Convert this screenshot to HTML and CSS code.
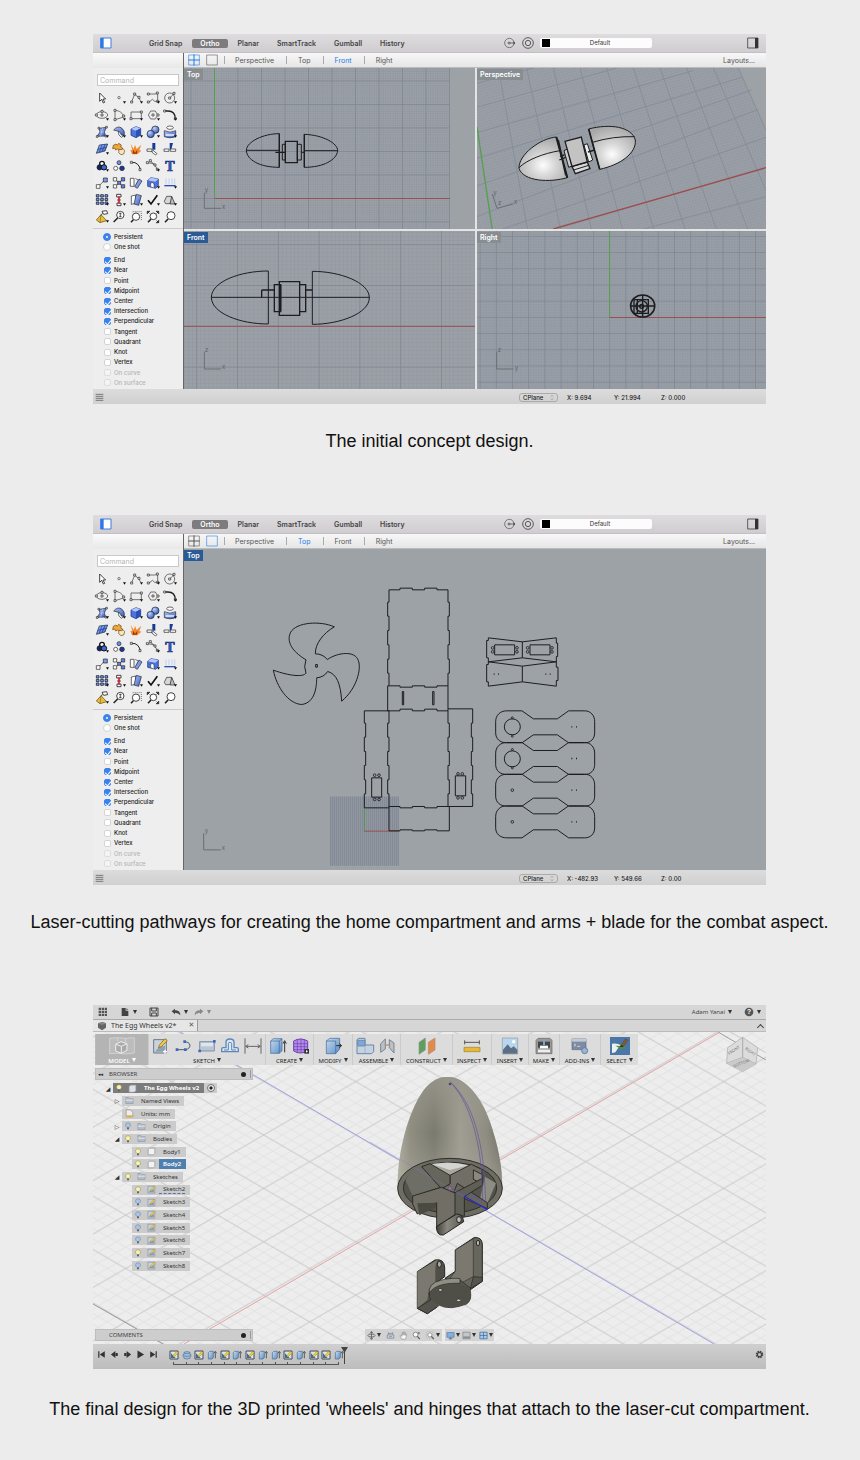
FILE: index.html
```html
<!DOCTYPE html>
<html lang="en">
<head>
<meta charset="utf-8">
<title>Design process</title>
<link rel="stylesheet" href="styles.css">
</head>
<body>
<svg class="defs" aria-hidden="true">
  <defs>
    <linearGradient id="blue" x1="0" y1="0" x2="1" y2="1"><stop offset="0" stop-color="#a9c0f6"/><stop offset="1" stop-color="#3a5fc8"/></linearGradient>
    <radialGradient id="ball" cx=".35" cy=".3" r=".8"><stop offset="0" stop-color="#c3d3fb"/><stop offset="1" stop-color="#2c4fb4"/></radialGradient>
    <linearGradient id="steel" x1="0" y1="0" x2="1" y2="1"><stop offset="0" stop-color="#c6dcf1"/><stop offset="1" stop-color="#5c8fc4"/></linearGradient>
    <radialGradient id="shell" cx=".5" cy=".65" r=".65"><stop offset="0" stop-color="#fdfdfd"/><stop offset=".4" stop-color="#d6d6d6"/><stop offset="1" stop-color="#a8a8a8"/></radialGradient>
    <linearGradient id="eggSide" x1="0" x2="1" y1="0" y2="0"><stop offset="0" stop-color="#b3b1a4"/><stop offset=".12" stop-color="#8f8d80"/><stop offset=".35" stop-color="#78776d"/><stop offset=".6" stop-color="#a19f93"/><stop offset=".85" stop-color="#8d8b7f"/><stop offset="1" stop-color="#6d6c62"/></linearGradient>
    <linearGradient id="eggTop" x1="0" x2="0" y1="0" y2="1"><stop offset="0" stop-color="#99978b" stop-opacity=".9"/><stop offset=".5" stop-color="#99978b" stop-opacity=".1"/><stop offset="1" stop-color="#b5b3a6" stop-opacity=".6"/></linearGradient>
    <linearGradient id="pin" x1="0" x2="1"><stop offset="0" stop-color="#3f3e38"/><stop offset=".4" stop-color="#8a897f"/><stop offset="1" stop-color="#57564e"/></linearGradient>

    <symbol id="more" viewBox="0 0 48 48"><path d="M36 34h9l-4.500 7z" fill="#111"/></symbol>
    <symbol id="t-select" viewBox="0 0 48 48"><path d="M17 9v25l6-6 5 11 4-2-5-10h8z" fill="#fff" stroke="#222" stroke-width="2.500"/></symbol>
    <symbol id="t-point" viewBox="0 0 48 48"><circle cx="24" cy="23" r="3.500" fill="#fff" stroke="#333" stroke-width="2"/></symbol>
    <symbol id="t-polyline" viewBox="0 0 48 48"><path d="M11 35l9-22 12 9 6 12" class="ln"/><path d="M8 33h6v6H8zM17 9h6v6h-6zM30 19h6v6h-6z" class="nd"/></symbol>
    <symbol id="t-curve" viewBox="0 0 48 48"><path d="M9 12h20q8 0 8-3M9 36q8 0 10-6t10 4h9M38 12v22" class="ln"/><path d="M7 9h6v6H7zM34 6h6v6h-6zM7 33h6v6H7zM35 31h6v6h-6z" class="nd"/></symbol>
    <symbol id="t-circle" viewBox="0 0 48 48"><circle cx="23" cy="24" r="15" class="ln"/><path d="M23 24l13-13" class="ln"/><path d="M20 21h6v6h-6zM33 7h6v6h-6z" class="nd"/></symbol>
    <symbol id="t-ellipse" viewBox="0 0 48 48"><ellipse cx="24" cy="24" rx="17" ry="10" class="ln"/><path d="M21 21h6v6h-6zM21 10h6v6h-6zM4 21h6v6H4z" class="nd"/></symbol>
    <symbol id="t-arc" viewBox="0 0 48 48"><path d="M12 38V10c14 1 24 8 26 20L12 38" class="ln"/><path d="M9 7h6v6H9zM9 35h6v6H9zM35 24h6v6h-6z" class="nd"/></symbol>
    <symbol id="t-rect" viewBox="0 0 48 48"><path d="M9 15h31v20H9z" class="ln"/><path d="M6 32h6v6H6zM37 12h6v6h-6z" class="nd"/></symbol>
    <symbol id="t-polygon" viewBox="0 0 48 48"><path d="M17 12h14l7 12-7 12H17l-7-12z" class="ln"/><path d="M21 21h6v6h-6zM36 21h6v6h-6z" class="nd"/></symbol>
    <symbol id="t-fillet" viewBox="0 0 48 48"><path d="M8 12h10c14 0 22 8 22 24" fill="none" stroke="#222" stroke-width="4"/><path d="M5 9h6v6H5zM37 32h6v6h-6z" class="nd"/></symbol>
    <symbol id="t-surface" viewBox="0 0 48 48"><path d="M15 13l22-3-6 14 4 12-26 1 9-13z" fill="url(#blue)" stroke="#223" stroke-width="2"/><path d="M26 11l-6 26M17 24h14" stroke="#dfe7ff" stroke-width="1.500"/><path d="M12 10h5v5h-5zM35 7h5v5h-5zM33 34h5v5h-5zM7 35h5v5H7z" class="nd"/></symbol>
    <symbol id="t-sweep" viewBox="0 0 48 48"><path d="M8 18q12-14 24-6 10 8 8 20l-9 3q-2-11-8-13-8-2-15-4z" fill="url(#blue)" stroke="#222" stroke-width="2"/><path d="M22 22q-1 12 9 18l8-5-8-2q-1-8-9-11z" fill="#fff" stroke="#222" stroke-width="2"/></symbol>
    <symbol id="t-box" viewBox="0 0 48 48"><path d="M9 15l15-7 14 5v20l-14 8-15-7z" fill="#4d74dc" stroke="#112a6e" stroke-width="2"/><path d="M9 15l15-7 14 5-14 7z" fill="#b4c7fb"/><path d="M24 20l14-7v20l-14 8z" fill="#2c50b4"/></symbol>
    <symbol id="t-spheres" viewBox="0 0 48 48"><circle cx="31" cy="17" r="11" fill="url(#ball)" stroke="#123" stroke-width="2"/><circle cx="17" cy="30" r="11" fill="url(#ball)" stroke="#123" stroke-width="2"/></symbol>
    <symbol id="t-cylinder" viewBox="0 0 48 48"><ellipse cx="24" cy="11" rx="10" ry="5" fill="#fff" stroke="#222" stroke-width="2"/><path d="M7 20q17 9 34 0v18q-17 7-34 0z" fill="url(#blue)" stroke="#223" stroke-width="2"/><path d="M11 33h26" stroke="#fff" stroke-width="4"/></symbol>
    <symbol id="t-plane" viewBox="0 0 48 48"><path d="M16 12l25-3-8 21-26 7z" fill="url(#blue)" stroke="#124" stroke-width="2"/><path d="M24 11l-8 23M33 10l-9 22M11 25l26-6" stroke="#173a93" stroke-width="2"/></symbol>
    <symbol id="t-puzzle" viewBox="0 0 48 48"><path d="M7 13l8-4 4 4 4-6 8 5-2 6 6 3-3 7-6 1-6-5-6 3-3-6-6 2z" fill="#f0a93c" stroke="#6d4208" stroke-width="2"/><path d="M24 25l8 1 4-3 5 6-3 10-8 2-7-6z" fill="#f6e7c4" stroke="#6d4208" stroke-width="2"/></symbol>
    <symbol id="t-explode" viewBox="0 0 48 48"><path d="M8 8l9 16 4-12 5 12 14-13-6 16 6 2-12 11H12l-5-14 6 2z" fill="#f18a2b"/><path d="M16 26l5 10 7-10-1 12H14z" fill="#9b3310"/></symbol>
    <symbol id="t-trim" viewBox="0 0 48 48"><path d="M22 6h9v20h-9z" fill="#173a93"/><path d="M6 24h15v7H6zM24 28l12 10-4 4-12-9z" fill="#fff" stroke="#222" stroke-width="2"/></symbol>
    <symbol id="t-split" viewBox="0 0 48 48"><path d="M23 6h10l-5 19h-5z" fill="#173a93"/><path d="M6 24h15v7H6zM25 24h16v7H25z" fill="#fff" stroke="#222" stroke-width="2"/></symbol>
    <symbol id="t-group" viewBox="0 0 48 48"><circle cx="24" cy="17" r="7" fill="#fff" stroke="#111" stroke-width="4"/><circle cx="17" cy="28" r="8" fill="#11245e" stroke="#111" stroke-width="2"/><circle cx="30" cy="28" r="8" fill="#3b68d8" stroke="#111" stroke-width="3"/></symbol>
    <symbol id="t-ungroup" viewBox="0 0 48 48"><circle cx="24" cy="14" r="6" fill="#6e8fe6" stroke="#222" stroke-width="2"/><circle cx="14" cy="31" r="6" fill="#fff" stroke="#222" stroke-width="2"/><circle cx="33" cy="31" r="7" fill="#173a93" stroke="#222" stroke-width="2"/></symbol>
    <symbol id="t-edit" viewBox="0 0 48 48"><path d="M10 14q12-3 19 5t8 16" fill="none" stroke="#222" stroke-width="3"/><path d="M7 10h6v6H7zM33 32h6v6h-6z" class="nd"/></symbol>
    <symbol id="t-handle" viewBox="0 0 48 48"><path d="M6 14q18 0 24 8t6 14M14 8l16 12" class="ln"/><path d="M4 11h6v6H4zM13 5h6v6h-6zM27 18h6v6h-6zM34 31h6v6h-6z" class="nd"/></symbol>
    <symbol id="t-text" viewBox="0 0 48 48"><text x="24" y="39" text-anchor="middle" font-family="Liberation Serif, serif" font-weight="700" font-size="42" fill="#3560cc" stroke="#152e73" stroke-width="2">T</text></symbol>
    <symbol id="t-scale" viewBox="0 0 48 48"><path d="M14 34l18-19" class="ln"/><path d="M7 29h11v11H7z" class="nd"/><path d="M28 9h12v12H28z" fill="#7c9bf0" stroke="#222" stroke-width="2"/></symbol>
    <symbol id="t-array" viewBox="0 0 48 48"><path d="M12 12l12 12 12-12M12 36l12-12 12 12" class="ln"/><path d="M7 8h10v10H7zM7 29h10v10H7z" class="nd"/><path d="M20 19h9v9h-9zM31 8h10v10H31zM31 29h10v10H31z" fill="#5f84e8" stroke="#222" stroke-width="2"/></symbol>
    <symbol id="t-rotate" viewBox="0 0 48 48"><path d="M7 10h11v24H7z" class="nd"/><path d="M22 10l10 6-6 10" class="ln"/><path d="M33 12l9 6-14 22-8-5z" fill="#7c9bf0" stroke="#222" stroke-width="2"/></symbol>
    <symbol id="t-solid" viewBox="0 0 48 48"><path d="M8 16l10-8 22 4v20l-8 8-24-6z" fill="#4d74dc" stroke="#112a6e" stroke-width="2"/><path d="M8 16l10-8 22 4-9 8z" fill="#b4c7fb"/><path d="M17 34V24q6-3 10 2v12" fill="#fff" stroke="#222" stroke-width="1.500"/></symbol>
    <symbol id="t-extrude" viewBox="0 0 48 48"><path d="M12 28V10M21 28V10M30 28V10M38 28V10" stroke="#b9caf8" stroke-width="2.500"/><path d="M7 32h34" stroke="#2a4fae" stroke-width="4"/></symbol>
    <symbol id="t-grid" viewBox="0 0 48 48"><path d="M7 8h8v7H7zM20 8h8v7h-8zM33 8h8v7h-8zM7 19h8v7H7zM20 19h8v7h-8zM33 19h8v7h-8zM7 30h8v7H7zM20 30h8v7h-8zM33 30h8v7h-8z" fill="#8aa3e6" stroke="#1c2540" stroke-width="2.500"/></symbol>
    <symbol id="t-align" viewBox="0 0 48 48"><path d="M17 7h13v8H17zM18 33h12v8H18z" fill="#fff" stroke="#222" stroke-width="2.500"/><path d="M24 13v22M19 24h10" stroke="#c02a3a" stroke-width="5"/></symbol>
    <symbol id="t-copy" viewBox="0 0 48 48"><path d="M10 12l13-3v25l-13 3z" fill="#fff" stroke="#222" stroke-width="2"/><path d="M25 7l15 4-8 29-14-4z" fill="url(#blue)" stroke="#223" stroke-width="2"/></symbol>
    <symbol id="t-check" viewBox="0 0 48 48"><path d="M9 25l9 11L37 10" fill="none" stroke="#111" stroke-width="5"/></symbol>
    <symbol id="t-shapes" viewBox="0 0 48 48"><path d="M7 28l7-15h14l3 10-8 12H11z" fill="#d7d7d7" stroke="#222" stroke-width="2"/><path d="M29 13l10 23H24z" fill="#bbb" stroke="#222" stroke-width="2"/></symbol>
    <symbol id="t-render" viewBox="0 0 48 48"><path d="M21 17l17 18-20 6-11-8z" fill="#e7bd3e" stroke="#5c4508" stroke-width="2"/><path d="M21 17l-3 24" stroke="#8c6a10" stroke-width="2"/><path d="M24 7l14-2 3 9-12 2z" fill="#fff" stroke="#222" stroke-width="2.500"/><path d="M26 12l-5 7" stroke="#222" stroke-width="2"/></symbol>
    <symbol id="t-zoom-dyn" viewBox="0 0 48 48"><circle cx="28" cy="18" r="11" class="lens"/><path d="M20 27L8 39" class="hd"/><path d="M28 11v14M24 14h8M24 22h8" stroke="#222" stroke-width="2"/></symbol>
    <symbol id="t-zoom-win" viewBox="0 0 48 48"><path d="M14 8h26v26" fill="none" stroke="#333" stroke-width="2" stroke-dasharray="3 3"/><circle cx="24" cy="23" r="11" class="lens"/><path d="M16 32l-7 8" class="hd"/></symbol>
    <symbol id="t-zoom-ext" viewBox="0 0 48 48"><path d="M7 15V7h8M33 7h8v8M41 33v8h-8M13 13L7 7M35 13l6-6M35 35l6 6" fill="none" stroke="#222" stroke-width="3"/><circle cx="25" cy="22" r="10" class="lens"/><path d="M18 30l-9 10" class="hd"/></symbol>
    <symbol id="t-zoom" viewBox="0 0 48 48"><circle cx="27" cy="20" r="12" class="lens"/><path d="M18 30l-9 10" class="hd"/></symbol>

    <symbol id="i-panel" viewBox="0 0 36 36"><path d="M2 3h31v30H2z" fill="#fff" stroke="#3f7de0" stroke-width="3"/><path d="M2 3h9v30H2z" fill="#2f78ea"/></symbol>
    <symbol id="i-panel-r" viewBox="0 0 36 36"><path d="M2 3h31v30H2z" fill="none" stroke="#444" stroke-width="2.500"/><path d="M24 3h9v30h-9z" fill="#333"/></symbol>
    <symbol id="i-gumball" viewBox="0 0 36 36"><circle cx="16" cy="18" r="14" fill="none" stroke="#666" stroke-width="2.500"/><circle cx="15" cy="18" r="3" fill="none" stroke="#333" stroke-width="2"/><path d="M18 18h15M28 14l5 4-5 4" stroke="#333" stroke-width="2" fill="none"/></symbol>
    <symbol id="i-ring" viewBox="0 0 36 36"><circle cx="18" cy="18" r="16" fill="none" stroke="#444" stroke-width="2.500"/><circle cx="18" cy="18" r="8" fill="none" stroke="#444" stroke-width="2.500"/></symbol>
    <symbol id="i-four" viewBox="0 0 36 36"><path d="M2 3h32v30H2z" fill="none" stroke="currentColor" stroke-width="2.500" opacity=".7"/><path d="M18 1v34M1 18h34" stroke="currentColor" stroke-width="3"/></symbol>
    <symbol id="i-one" viewBox="0 0 36 36"><path d="M2 3h32v30H2z" fill="none" stroke="currentColor" stroke-width="2.500" opacity=".7"/></symbol>
    <symbol id="i-lines" viewBox="0 0 27 27"><path d="M2 4h23M2 10h23M2 16h23M2 22h23" stroke="#777" stroke-width="3"/></symbol>
    <symbol id="i-chev" viewBox="0 0 12 24"><path d="M2 9l4-5 4 5M2 15l4 5 4-5" fill="none" stroke="#888" stroke-width="2"/></symbol>

    <symbol id="f-apps" viewBox="0 0 30 30"><path d="M2 2h7v7H2zM11 2h7v7h-7zM20 2h7v7h-7zM2 11h7v7H2zM11 11h7v7h-7zM20 11h7v7h-7zM2 20h7v7H2zM11 20h7v7h-7zM20 20h7v7h-7z" fill="#555"/></symbol>
    <symbol id="f-file" viewBox="0 0 30 30"><path d="M5 3h12v8h8v16H5z" fill="#444"/><path d="M19 3l6 6h-6z" fill="#666"/></symbol>
    <symbol id="f-save" viewBox="0 0 30 30"><path d="M3 3h24v24H3zM8 3v9h14V3M8 27v-9h14v9" fill="none" stroke="#444" stroke-width="3"/></symbol>
    <symbol id="f-undo" viewBox="0 0 30 30"><path d="M2 13l10-8v5q16 0 16 15-5-8-16-8v5z" fill="currentColor"/></symbol>
    <symbol id="f-redo" viewBox="0 0 30 30"><path d="M28 13L18 5v5Q2 10 2 25q5-8 16-8v5z" fill="currentColor"/></symbol>
    <symbol id="f-help" viewBox="0 0 30 30"><circle cx="15" cy="15" r="13" fill="#555"/><text x="15" y="22" font-size="20" font-weight="700" font-family="Liberation Sans, sans-serif" text-anchor="middle" fill="#fff">?</text></symbol>
    <symbol id="f-cube" viewBox="0 0 30 30"><path d="M3 7l13-4 11 4v13l-12 8-12-8z" fill="#666"/><path d="M3 7l12 5 12-5-11-4z" fill="#888"/></symbol>
    <symbol id="f-model" viewBox="0 0 78 54"><path d="M2 4l24-2 24 2 26-2v46l-26 3-24-2-24 1zM26 2v10M50 4v12" fill="#bcbcbc" stroke="#dedede" stroke-width="2"/><path d="M20 22l16-8 18 6v20l-17 9-17-7z" fill="#aaa" stroke="#eee" stroke-width="3"/><path d="M20 22l17 6 17-8M37 28v20" fill="none" stroke="#eee" stroke-width="3"/></symbol>
    <symbol id="f-sketch" viewBox="0 0 60 54"><path d="M8 8h38v40H8z" fill="#c8d3df" stroke="#6b7785" stroke-width="3"/><path d="M12 44q10-18 30-18v18z" fill="#8fa0b3"/><path d="M22 32l4-9L42 5l7 6-18 18z" fill="#f2cb3c" stroke="#7c5c10" stroke-width="2"/><path d="M42 38v12M36 44h12" stroke="#fff" stroke-width="4"/></symbol>
    <symbol id="f-line" viewBox="0 0 60 54"><path d="M8 38h26q14-2 14-14-2-10-16-10" fill="none" stroke="#4b5c74" stroke-width="3"/><path d="M5 34h8v8H5zM30 34h8v8h-8zM28 10h8v8h-8z" fill="#3c68bd"/></symbol>
    <symbol id="f-rect" viewBox="0 0 60 54"><path d="M8 14h44v28H8z" fill="#b9c6d6" stroke="#8291a5" stroke-width="3"/><path d="M12 18h36v10H12z" fill="#dde5ee"/><path d="M48 9h8v8h-8zM4 38h8v8H4z" fill="#3c68bd"/></symbol>
    <symbol id="f-offset" viewBox="0 0 60 54"><path d="M5 36q0-4 4-4h9V16q0-10 12-10t12 10v16h9q4 0 4 4v8H5z" fill="#dfe8f2" stroke="#5f86b8" stroke-width="4"/><path d="M12 39h13V20q0-4 5-4t5 4v19h13" stroke="#5f86b8" stroke-width="3" fill="none"/></symbol>
    <symbol id="f-dim" viewBox="0 0 60 54"><path d="M6 4v46M54 4v46M8 28h44M16 23l-8 5 8 5M44 23l8 5-8 5" fill="none" stroke="#666" stroke-width="3"/></symbol>
    <symbol id="f-extrude" viewBox="0 0 60 54"><path d="M8 12l8-7h26v36l-8 8H8z" fill="url(#steel)" stroke="#3e6795" stroke-width="2"/><path d="M8 12h26v37M34 12l8-7" fill="none" stroke="#3e6795" stroke-width="2"/><path d="M50 46V14M45 20l5-9 5 9" fill="none" stroke="#333" stroke-width="3"/></symbol>
    <symbol id="f-form" viewBox="0 0 60 54"><path d="M8 12q20-12 42 0v30q-22 12-42 0z" fill="#b58ce8" stroke="#6e40b5" stroke-width="3"/><path d="M19 7v40M30 5v43M40 7v40M8 20h42M8 29h42M8 38h42" stroke="#6e40b5" stroke-width="2"/><path d="M40 36h14v14H40z" fill="#333"/><path d="M45 39l6 4-6 4z" fill="#fff"/></symbol>
    <symbol id="f-press" viewBox="0 0 60 54"><path d="M10 12l10-8h30v32L38 50H10z" fill="url(#steel)" stroke="#3e6795" stroke-width="2"/><path d="M10 12h28v38" fill="none" stroke="#3e6795" stroke-width="2"/><path d="M40 26h14M49 20l7 6-7 6" stroke="#222" stroke-width="3" fill="none"/></symbol>
    <symbol id="f-assemble" viewBox="0 0 60 54"><path d="M6 8l6-4h18v20h26v20l-6 6H6z" fill="#c4d3e4" stroke="#6c86a5" stroke-width="3"/><path d="M8 10h22v16H8z" fill="#7fa8d6" stroke="#5879a2" stroke-width="2"/><path d="M6 28h24v22" fill="none" stroke="#8fa3ba" stroke-width="2"/></symbol>
    <symbol id="f-joint" viewBox="0 0 60 54"><path d="M8 46V20l14-14v30zM34 32V8l14 10v30z" fill="#b9c0c9" stroke="#7b8592" stroke-width="3"/><path d="M22 24h12" stroke="#c98c50" stroke-width="4"/></symbol>
    <symbol id="f-construct" viewBox="0 0 60 54"><path d="M6 16L25 3v36L6 52z" fill="#5e9e5e" stroke="#8a9a8a" stroke-width="2"/><path d="M34 16L54 3v36L34 52z" fill="#e08a4e" stroke="#b98a68" stroke-width="2"/></symbol>
    <symbol id="f-inspect" viewBox="0 0 60 54"><path d="M8 16h44M8 10v12M52 10v12" stroke="#555" stroke-width="3"/><path d="M6 31h48v13H6z" fill="#e6b83c" stroke="#a37f1d" stroke-width="2"/></symbol>
    <symbol id="f-insert" viewBox="0 0 60 54"><path d="M7 3h46v48H7z" fill="#b8d6ee" stroke="#8d9aa6" stroke-width="2"/><path d="M9 38l14-16 10 12 8-6 11 10v12H9z" fill="#5c6f85"/><circle cx="41" cy="14" r="5" fill="#fff"/></symbol>
    <symbol id="f-make" viewBox="0 0 60 54"><path d="M6 10l6-6h36l6 6v40H6z" fill="#999" stroke="#666" stroke-width="2"/><path d="M12 14h36v18H12z" fill="#444"/><path d="M18 26h24v8H18z" fill="#fff"/><path d="M27 8h6v16h-6z" fill="#77a6d8"/><path d="M12 38h36v8H12z" fill="#eee"/></symbol>
    <symbol id="f-addins" viewBox="0 0 60 54"><path d="M6 6h42v32H6z" fill="#7d8ca3" stroke="#5d6a7d" stroke-width="2"/><path d="M6 6h42v8H6z" fill="#c1cad6"/><path d="M12 20l5 4-5 4M22 28h8" stroke="#fff" stroke-width="2" fill="none"/><circle cx="44" cy="41" r="9" fill="#9db4d2" stroke="#5f7fa8" stroke-width="3"/></symbol>
    <symbol id="f-select" viewBox="0 0 60 54"><path d="M6 20q16-2 26 4l-8 10-8 12-10 2z" fill="#eef2ec"/><path d="M16 26l34 2-14 10z" fill="#4f8f46"/><path d="M32 26l14-20 8 3-13 19z" fill="#8a5a2a" stroke="#333" stroke-width="1"/><path d="M28 30l8-5 4 4z" fill="#222"/></symbol>

    <symbol id="b-on" viewBox="0 0 24 30"><path d="M8 21q-6-5-6-10a10 9 0 0 1 20 0q0 5-6 10z" fill="#fbf3a8" stroke="#8b864d" stroke-width="2"/><path d="M8 21h8v7H8z" fill="#666"/></symbol>
    <symbol id="b-off" viewBox="0 0 24 30"><path d="M8 21q-6-5-6-10a10 9 0 0 1 20 0q0 5-6 10z" fill="#a9c6ea" stroke="#637e9f" stroke-width="2"/><path d="M8 21h8v7H8z" fill="#666"/></symbol>
    <symbol id="n-folder" viewBox="0 0 30 30"><path d="M3 5h9l3 4h12v16H3z" fill="#b4bdc9" stroke="#8a94a2" stroke-width="2"/><path d="M3 12h24v4H3z" fill="#dde2e9"/></symbol>
    <symbol id="n-doc" viewBox="0 0 30 30"><path d="M4 3h14l8 8v15H4z" fill="#eee" stroke="#888" stroke-width="2"/><path d="M3 21h24v6H3z" fill="#dcb03c"/></symbol>
    <symbol id="n-body" viewBox="0 0 30 30"><path d="M4 7l4-3h18v18l-4 4H4z" fill="#f3f3f3" stroke="#888" stroke-width="2"/></symbol>
    <symbol id="n-root" viewBox="0 0 30 30"><path d="M4 8l6-4h16v18l-5 5H4z" fill="#dde2e8" stroke="#a8b0ba" stroke-width="2"/></symbol>
    <symbol id="n-sketch" viewBox="0 0 30 30"><path d="M3 4h23v23H3z" fill="#c6d0dc" stroke="#7f8c9b" stroke-width="2"/><path d="M6 24q4-10 17-10v10z" fill="#8b9bad"/><path d="M11 18L24 3l4 4-13 13z" fill="#f1cf45" stroke="#86661a" stroke-width="1"/></symbol>

    <symbol id="m-sketch" viewBox="0 0 30 30"><path d="M3 3h24v24H3z" fill="#dbe3ea" stroke="#3f4a57" stroke-width="3"/><path d="M6 24V10l14 14z" fill="#46698f"/><path d="M11 18L23 4l5 4-13 13z" fill="#f4d03b" stroke="#765a10" stroke-width="1"/></symbol>
    <symbol id="m-revolve" viewBox="0 0 30 30"><path d="M6 7q9-5 18 0v6l3 1v5l-3 2v4q-9 4-18 0v-4l-3-2v-5l3-1z" fill="#9dbfe2" stroke="#55738f" stroke-width="2"/><path d="M6 9q9 4 18 0M5 17q10 5 20 0" fill="none" stroke="#55738f" stroke-width="2"/></symbol>
    <symbol id="m-extrude" viewBox="0 0 30 30"><path d="M4 8l4-4h11v18l-4 5H4z" fill="url(#steel)" stroke="#47678a" stroke-width="2"/><path d="M25 25V7M21 10l4-6 4 6" fill="none" stroke="#444" stroke-width="2.500"/></symbol>
    <symbol id="p-first" viewBox="0 0 30 30"><path d="M4 4h4v22H4zM26 4v22L9 15z" fill="#333"/></symbol>
    <symbol id="p-prev" viewBox="0 0 30 30"><path d="M18 3v24L3 15zM19 10h7v10h-7z" fill="#333"/></symbol>
    <symbol id="p-next" viewBox="0 0 30 30"><path d="M12 3v24l15-12zM4 10h7v10H4z" fill="#333"/></symbol>
    <symbol id="p-play" viewBox="0 0 30 30"><path d="M5 2v26l22-13z" fill="#333"/></symbol>
    <symbol id="p-last" viewBox="0 0 30 30"><path d="M22 4h4v22h-4zM4 4v22l17-11z" fill="#333"/></symbol>
    <symbol id="v-orbit" viewBox="0 0 30 30"><path d="M15 2v26M10 7l5-5 5 5M10 23l5 5 5-5" fill="none" stroke="#555" stroke-width="2.500"/><ellipse cx="15" cy="15" rx="12" ry="5" fill="none" stroke="#555" stroke-width="2.500"/></symbol>
    <symbol id="v-look" viewBox="0 0 30 30"><path d="M4 13h22v11H4zM8 8h14M8 4v8M22 4v8M10 19h10" fill="none" stroke="#7c879c" stroke-width="2.500"/></symbol>
    <symbol id="v-pan" viewBox="0 0 30 30"><path d="M9 27L3 16l4-1 3 3V6h3v8l1-11h3v11l2-9h3l-1 10 3-5 2 1-4 16z" fill="#f8f8f8" stroke="#777" stroke-width="1.500"/></symbol>
    <symbol id="v-zoom" viewBox="0 0 30 30"><circle cx="12" cy="12" r="8" fill="#f4f8fb" stroke="#777" stroke-width="2.500"/><path d="M18 18l8 9" stroke="#555" stroke-width="4"/><path d="M23 3v8M19 7h8" stroke="#555" stroke-width="2"/></symbol>
    <symbol id="v-fit" viewBox="0 0 30 30"><path d="M3 3h20v20H3z" fill="#eee" stroke="#999" stroke-width="1.500"/><circle cx="13" cy="13" r="7" fill="#fff" stroke="#777" stroke-width="2.500"/><path d="M18 18l8 9" stroke="#555" stroke-width="4"/></symbol>
    <symbol id="v-display" viewBox="0 0 30 30"><path d="M3 5h24v16H3z" fill="#7fb0e6" stroke="#54728f" stroke-width="2"/><path d="M9 26h12M15 21v5" stroke="#666" stroke-width="3"/></symbol>
    <symbol id="v-env" viewBox="0 0 30 30"><path d="M3 4h24v22H3z" fill="#c3c7cc" stroke="#777" stroke-width="2"/><path d="M4 18h22v7H4z" fill="#8b9097"/></symbol>
    <symbol id="v-split" viewBox="0 0 30 30"><path d="M3 4h24v22H3zM15 4v22M3 15h24" fill="#a6caf0" stroke="#456d9a" stroke-width="2.500"/></symbol>
    <symbol id="f-gear" viewBox="0 0 30 30"><circle cx="15" cy="15" r="10" fill="none" stroke="#444" stroke-width="5" stroke-dasharray="5 2.850"/><circle cx="15" cy="15" r="7" fill="none" stroke="#444" stroke-width="4"/></symbol>

    <symbol id="arm" viewBox="430 440 310 115" overflow="visible">
      <path d="M470 451H516L550 475H622L656 451H704C722 451 734 465 734 483V517C734 535 722 547 704 547H656L622 523H550L516 547H470C450 547 437 535 437 517V483C437 465 450 451 470 451Z"/>
    </symbol>
    <pattern id="gTopMin" x="214" y="198" width="2.350" height="2.350" patternUnits="userSpaceOnUse"><path d="M0 .4H3M.4 0V3" class="gmin"/></pattern>
    <pattern id="gTopMaj" x="214" y="198" width="23.500" height="23.500" patternUnits="userSpaceOnUse"><path d="M0 .5H24M.5 0V24" class="gmaj"/></pattern>
    <pattern id="gFrontMin" x="196.200" y="325.800" width="4.080" height="4.080" patternUnits="userSpaceOnUse"><path d="M0 .5H5M.5 0V5" class="gmin"/></pattern>
    <pattern id="gFrontMaj" x="196.200" y="325.800" width="40.800" height="40.800" patternUnits="userSpaceOnUse"><path d="M0 .5H41M.5 0V41" class="gmaj"/></pattern>
    <pattern id="gRightMin" x="609.200" y="316.900" width="1.620" height="1.620" patternUnits="userSpaceOnUse"><path d="M0 .4H2M.4 0V2" class="gmin"/></pattern>
    <pattern id="gRightMaj" x="609.200" y="316.900" width="16.200" height="16.200" patternUnits="userSpaceOnUse"><path d="M0 .5H17M.5 0V17" class="gmaj"/></pattern>
    <pattern id="gPersp" width="1" height="1" patternUnits="userSpaceOnUse" patternTransform="matrix(8 -2.200 2.400 8 0 0)"><path d="M0 .2H1M.2 0V1" fill="none" stroke="#858d98" stroke-width=".18" opacity=".6"/></pattern>
    <pattern id="gIsoMaj" x="217.700" y="1108.300" width="92" height="53.400" patternUnits="userSpaceOnUse"><path d="M0 0L92 53.400M92 0L0 53.400" stroke="#c4c4c5" stroke-width=".8"/></pattern>
    <pattern id="gIsoMin" x="217.700" y="1108.300" width="18.400" height="10.680" patternUnits="userSpaceOnUse"><path d="M0 0L18.400 10.680M18.400 0L0 10.680" stroke="#d9d9da" stroke-width=".6"/></pattern>
  </defs>
</svg>

<template id="sidebar-template">
  <div class="side-strip"></div>
  <div class="side-body">
    <input class="command" type="text" placeholder="Command" aria-label="Command">
    <div class="tools"></div>
  </div>
  <div class="snaps">
    <div class="snap-mode"></div>
    <div class="snap-list"></div>
  </div>
</template>

<main class="page">
  <figure class="shot">
    <div class="rhino">
      <header class="toolbar">
        <button class="icon-btn" aria-label="Left panel"><svg class="ic12"><use href="#i-panel"/></svg></button>
        <nav class="modes">
          <button>Grid Snap</button><button class="on">Ortho</button><button>Planar</button><button>SmartTrack</button><button>Gumball</button><button>History</button>
        </nav>
        <div class="layer">
          <button class="icon-btn" aria-label="Move"><svg class="ic12"><use href="#i-gumball"/></svg></button>
          <button class="icon-btn" aria-label="Target"><svg class="ic12"><use href="#i-ring"/></svg></button>
          <span class="layer-field"><i class="swatch"></i><select aria-label="Layer"><option>Default</option></select></span>
        </div>
        <button class="icon-btn" aria-label="Right panel"><svg class="ic12"><use href="#i-panel-r"/></svg></button>
      </header>
      <aside class="sidebar" data-name="concept"></aside>
      <nav class="views">
        <button class="icon-btn on" aria-label="Four views"><svg class="ic12"><use href="#i-four"/></svg></button>
        <button class="icon-btn" aria-label="One view"><svg class="ic12"><use href="#i-one"/></svg></button>
        <i class="sep"></i><button>Perspective</button><i class="sep"></i><button>Top</button><i class="sep"></i><button class="on">Front</button><i class="sep"></i><button>Right</button>
        <button class="layouts">Layouts...</button>
      </nav>
      <div class="viewports">
        <section class="vp">
          <svg viewBox="184 68 291 161" preserveAspectRatio="xMidYMid slice">
            <path d="M184 68H450V229H184z" fill="#9ba0a7"/><path d="M184 68H450V229H184z" fill="url(#gTopMin)"/><path d="M184 68H450V229H184z" fill="url(#gTopMaj)"/>
            <path d="M214.500 68V198.500" class="green"/><path d="M214.500 198.500H449.700" class="red"/>
            <g transform="translate(90 30) scale(.33333)" class="wire">
              <path d="M568 311C520 311 470 335 469 361C470 390 510 412 568 412Z"/><path d="M643 313C700 315 743 340 743 362C740 390 700 412 643 412Z"/>
              <path d="M568 311V412M643 313V412M586 334H622V398H586ZM556 367H586" stroke-width="4"/><path d="M469 361H568M643 362H743M577 343H586V390H577ZM622 343H634V390H622ZM634 367H643" stroke-width="3"/>
              <path d="M343 488V535H393" class="axis"/><text x="344" y="487" class="axt">y</text><text x="396" y="537" class="axt">x</text>
            </g>
          </svg>
          <span class="vp-name">Top</span>
        </section>
        <section class="vp">
          <svg viewBox="477 68 289 161" preserveAspectRatio="xMidYMid slice">
            <g transform="translate(430 30) scale(.33333)">
              <path d="M140 114H925L1008 300V600H140z" fill="#9ba0a7"/><path d="M140 114H925L1008 300V600H140z" fill="url(#gPersp)"/>
              <path d="M205 114L293 600M290 114L392 600M370 114L485 600M450 114L578 600M530 114L672 600M610 114L766 600M690 114L860 600M770 114L954 600M850 114L1008 482M925 114L1008 300M140 160L310 114M140 232L560 114M140 308L790 122M140 385L935 142M140 468L965 180M140 560L985 238M210 600L1008 322M630 600L1008 500" fill="none" stroke="#848b96" stroke-width="2.500"/>
              <path d="M370 597L1008 413" stroke="#9a4f50" stroke-width="4"/><path d="M141 290L187 600" stroke="#55a04f" stroke-width="4"/>
              <g class="wire">
                <path d="M379 321C330 325 265 375 267 415C280 455 360 458 412 443Z" fill="url(#shell)" stroke-width="3"/><path d="M267 413C290 390 340 370 390 362" stroke-width="3"/><path d="M379 321L412 443M384 330L408 436" stroke-width="6"/>
                <path d="M476 297C540 280 605 290 616 330C620 370 570 405 509 418Z" fill="url(#shell)" stroke-width="3"/><path d="M487 337Q550 318 614 320" stroke-width="3"/><path d="M476 297L509 418" stroke-width="5"/>
                <path d="M388 390L412 380M390 380L404 374" stroke-width="4"/>
                <path d="M402 362L412 357L426 408L416 412Z" fill="#ccc" stroke-width="3"/>
                <path d="M462 345L472 341L488 390L476 396Z" fill="#eee" stroke-width="3"/><path d="M474 366L494 360" stroke-width="4"/>
                <path d="M426 409L472 396L480 416L436 431Z" fill="#d8d8d8" stroke-width="4"/><path d="M431 420L476 406" stroke-width="3"/>
                <path d="M405 334L454 321L472 396L426 409Z" fill="#c3c3c3" stroke-width="4"/>
              </g>
              <path d="M187 492L201 535L250 522" fill="none" stroke="#6b6f74" stroke-width="3"/><text x="190" y="494" class="axt">y</text><text x="204" y="524" class="axt">z</text><text x="252" y="523" class="axt">x</text>
            </g>
          </svg>
          <span class="vp-name">Perspective</span>
        </section>
        <section class="vp">
          <svg viewBox="184 231 291 158" preserveAspectRatio="xMidYMid slice">
            <path d="M184 231H475V389H184z" fill="#9ba0a7"/><path d="M184 231H475V389H184z" fill="url(#gFrontMin)"/><path d="M184 231H475V389H184z" fill="url(#gFrontMaj)"/>
            <path d="M184 326.300H475" class="red"/>
            <g transform="translate(90 225) scale(.33333)" class="wire">
              <path d="M535 138C450 138 365 170 364 217C365 265 450 297 535 297ZM667 139C750 139 838 172 838 218C838 265 750 298 667 298ZM364 217H838" stroke-width="3"/>
              <path d="M568 170H629V271H568ZM553 179H572V260H553ZM629 179H647V260H629ZM515 195H553M515 195V218M647 195H667" stroke-width="4"/><path d="M571 180V258" stroke-width="6"/>
              <path d="M343 380V432H393" class="axis"/><text x="345" y="382" class="axt">z</text><text x="396" y="433" class="axt">x</text>
            </g>
          </svg>
          <span class="vp-name on">Front</span>
        </section>
        <section class="vp">
          <svg viewBox="477 231 289 158" preserveAspectRatio="xMidYMid slice">
            <path d="M477 231H766V389H477z" fill="#9ba0a7"/><path d="M477 231H766V389H477z" fill="url(#gRightMin)"/><path d="M477 231H766V389H477z" fill="url(#gRightMaj)"/>
            <path d="M609.500 231V317.500" class="green"/><path d="M609.500 317.500H766" class="red"/>
            <g transform="translate(430 225) scale(.33333)" class="wire">
              <ellipse cx="638" cy="243" rx="36" ry="33" stroke-width="5"/><circle cx="635" cy="244" r="17" stroke-width="4"/><path d="M602 243H674M638 210V276M612 224H655V265H612ZM622 224V265" stroke-width="4"/><circle cx="635" cy="244" r="6" stroke-width="4"/>
              <path d="M200 380V432H250" class="axis"/><text x="203" y="381" class="axt">z</text><text x="254" y="434" class="axt">y</text>
            </g>
          </svg>
          <span class="vp-name">Right</span>
        </section>
      </div>
      <footer class="status">
        <svg class="ic9"><use href="#i-lines"/></svg>
        <span class="cplane"><select aria-label="Plane"><option>CPlane</option></select><svg><use href="#i-chev"/></svg></span>
        <span class="coord">X: 9.694</span><span class="coord">Y: 21.994</span><span class="coord last">Z: 0.000</span>
      </footer>
    </div>
    <figcaption>The initial concept design.</figcaption>
  </figure>

  <figure class="shot">
    <div class="rhino">
      <header class="toolbar">
        <button class="icon-btn" aria-label="Left panel"><svg class="ic12"><use href="#i-panel"/></svg></button>
        <nav class="modes">
          <button>Grid Snap</button><button class="on">Ortho</button><button>Planar</button><button>SmartTrack</button><button>Gumball</button><button>History</button>
        </nav>
        <div class="layer">
          <button class="icon-btn" aria-label="Move"><svg class="ic12"><use href="#i-gumball"/></svg></button>
          <button class="icon-btn" aria-label="Target"><svg class="ic12"><use href="#i-ring"/></svg></button>
          <span class="layer-field"><i class="swatch"></i><select aria-label="Layer"><option>Default</option></select></span>
        </div>
        <button class="icon-btn" aria-label="Right panel"><svg class="ic12"><use href="#i-panel-r"/></svg></button>
      </header>
      <aside class="sidebar" data-name="laser"></aside>
      <nav class="views">
        <button class="icon-btn" aria-label="Four views"><svg class="ic12"><use href="#i-four"/></svg></button>
        <button class="icon-btn on" aria-label="One view"><svg class="ic12"><use href="#i-one"/></svg></button>
        <i class="sep"></i><button>Perspective</button><i class="sep"></i><button class="on">Top</button><i class="sep"></i><button>Front</button><i class="sep"></i><button>Right</button>
        <button class="layouts">Layouts...</button>
      </nav>
      <div class="viewports single">
        <section class="vp">
          <svg viewBox="184 548 582 322" preserveAspectRatio="xMidYMid slice">
            <defs><pattern id="gPatch" x="720" y="858" width="6" height="6" patternUnits="userSpaceOnUse"><path d="M0 1H6M1 0V6" fill="none" stroke="#78808e" stroke-width="2"/></pattern></defs>
            <g transform="translate(90 510) scale(.33333)" class="wire" stroke-width="3">
              <path d="M720 858H927V1066H720z" fill="#989fa7" stroke="none"/><path d="M720 858H927V1066H720z" fill="url(#gPatch)" stroke="none"/>
              <path d="M823 858V962" stroke="#4f9b4a"/><path d="M823 962H927" stroke="#9a4f50"/>
              <path d="M676 430C675 400 700 368 733 349C690 330 620 335 602 365C585 400 618 430 648 448Q640 468 648 488C640 500 600 497 550 479C560 530 595 580 635 582C675 577 680 530 680 502Q702 500 713 483C740 490 752 520 755 572C800 535 815 475 805 450C795 420 745 425 712 447Q698 430 676 430Z"/>
              <path d="M677 462H682V470H677Z"/>
              <path d="M341 968V1018H392" class="axis"/><text x="344" y="968" class="axt">y</text><text x="395" y="1019" class="axt">x</text>
            </g>
            <g transform="translate(350 560) scale(.33333)" class="wire" stroke-width="3">
              <path d="M117 376V338H113V296H117V253H113V210H117V167H113V125H117V88H150V83H187V88H224V83H261V88H294V125H298V167H294V210H298V253H294V296H298V338H294V376"/>
              <path d="M113 376H150V380H187V376H224V380H261V376H294V451H261V446H224V451H187V446H150V451H113ZM157 393H161V433H157ZM248 393H252V433H248Z"/>
              <path d="M117 451H43V488H47V530H43V573H47V615H43V658H47V700H43V742H117"/>
              <path d="M117 451V488H113V530H117V573H113V615H117V658H113V700H117V811H150V808H187V811H224V808H261V811H298V738H261V742H224V738H187V742H150V738H117"/>
              <path d="M294 451V488H298V530H294V573H298V615H294V658H298V700H294V738"/>
              <path d="M294 445H368V488H364V530H368V573H364V615H368V658H364V700H368V738H294"/>
              <path d="M65 652H95V710H65ZM316 646H347V706H316Z"/>
              <g stroke-width="2.500"><circle cx="74" cy="644" r="4"/><circle cx="87" cy="644" r="4"/><circle cx="74" cy="717" r="4"/><circle cx="87" cy="717" r="4"/><circle cx="324" cy="640" r="4"/><circle cx="337" cy="640" r="4"/><circle cx="324" cy="712" r="4"/><circle cx="337" cy="712" r="4"/>
              <circle cx="428" cy="262" r="4"/><circle cx="428" cy="274" r="4"/><circle cx="501" cy="262" r="4"/><circle cx="501" cy="274" r="4"/><circle cx="533" cy="262" r="4"/><circle cx="533" cy="274" r="4"/><circle cx="606" cy="262" r="4"/><circle cx="606" cy="274" r="4"/>
              <circle cx="487" cy="472" r="3"/><circle cx="487" cy="527" r="3"/><circle cx="487" cy="567" r="3"/><circle cx="487" cy="622" r="3"/><circle cx="487" cy="689" r="4"/><circle cx="487" cy="784" r="4"/></g>
              <path d="M415 232L517 244L619 232V248H623V288H619V304L517 292L415 304V292H410V240H415ZM517 244V292M415 304L517 317L619 304V320H624V360H619V377L517 364L415 377V364H410V312H415ZM517 317V364M434 253H494V283H434ZM540 253H600V283H540Z"/>
              <path d="M431 341h3M444 341h3M586 341h3M599 341h3M664 499h3M678 499h3M664 594h3M678 594h3M664 689h3M678 689h3M664 784h3M678 784h3" stroke-width="4"/>
              <circle cx="487" cy="499" r="24"/><circle cx="487" cy="595" r="24"/>
              <use href="#arm" x="430" y="440" width="310" height="115"/><use href="#arm" x="430" y="535" width="310" height="115"/><use href="#arm" x="430" y="630" width="310" height="115"/><use href="#arm" x="430" y="725" width="310" height="115"/>
            </g>
          </svg>
          <span class="vp-name on">Top</span>
        </section>
      </div>
      <footer class="status">
        <svg class="ic9"><use href="#i-lines"/></svg>
        <span class="cplane"><select aria-label="Plane"><option>CPlane</option></select><svg><use href="#i-chev"/></svg></span>
        <span class="coord">X: -482.93</span><span class="coord">Y: 549.66</span><span class="coord last">Z: 0.00</span>
      </footer>
    </div>
    <figcaption>Laser-cutting pathways for creating the home compartment and arms + blade for the combat aspect.</figcaption>
  </figure>

  <figure class="shot shot-fusion">
    <div class="fusion">
      <header class="f-bar">
        <button aria-label="Data panel"><svg class="ic10"><use href="#f-apps"/></svg></button>
        <button aria-label="File"><svg class="ic10"><use href="#f-file"/></svg><i class="tri"></i></button>
        <button aria-label="Save"><svg class="ic10"><use href="#f-save"/></svg></button>
        <button aria-label="Undo"><svg class="ic10"><use href="#f-undo"/></svg><i class="tri"></i></button>
        <button class="dim" aria-label="Redo"><svg class="ic10"><use href="#f-redo"/></svg><i class="tri"></i></button>
        <button class="user">Adam Yanai<i class="tri"></i></button>
        <button aria-label="Help"><svg class="ic10"><use href="#f-help"/></svg><i class="tri"></i></button>
      </header>
      <div class="f-tabs">
        <div class="f-tab"><svg class="ic10"><use href="#f-cube"/></svg><span>The Egg Wheels v2*</span><button aria-label="Close tab">✕</button></div>
        <button class="f-up" aria-label="Collapse"><i></i></button>
      </div>
      <div class="f-canvas">
        <svg class="scene" viewBox="93 1032 673 312" preserveAspectRatio="xMidYMid slice">
          <path d="M93 1032H766V1344H93z" fill="#ededee"/><path d="M93 1032H766V1344H93z" fill="url(#gIsoMin)"/><path d="M93 1032H766V1344H93z" fill="url(#gIsoMaj)"/>
          <path d="M93 1304L163 1344M718 1032L766 1060" stroke="#888" stroke-width=".8"/>
          <path d="M720 1032L184 1344" stroke="#e59a9a" stroke-width=".9"/><path d="M180 1032L714 1344" stroke="#9c9ce4" stroke-width=".9"/>
          <g transform="translate(430 1000) scale(.33333)">
            <path d="M938 112L983 143L978 192L938 215L890 190L893 143Z" fill="#dcdcdc" stroke="#a9a9a9" stroke-width="2"/><path d="M938 112V172L890 190M938 172L978 192" fill="none" stroke="#8f8f8f" stroke-width="2"/><path d="M938 172L978 192L938 215L890 190Z" fill="#cacaca"/>
            <text x="898" y="165" class="cube" transform="rotate(-34 898 165)">FRONT</text><text x="944" y="148" class="cube" transform="rotate(34 944 148)">RIGHT</text><text x="912" y="203" class="cube" transform="rotate(-22 912 203)">BOTTOM</text>
          </g>
          <g transform="translate(370 1070) scale(.33333)" stroke-linejoin="round">
            <path d="M83 355C82 250 112 130 160 62C190 22 222 18 245 22C290 28 335 85 358 150C385 225 397 290 397 355Z" fill="url(#eggSide)"/>
            <path d="M83 355C82 250 112 130 160 62C190 22 222 18 245 22C290 28 335 85 358 150C385 225 397 290 397 355Z" fill="url(#eggTop)"/>
            <ellipse cx="240" cy="355" rx="157" ry="90" fill="#6e6d63" stroke="#2e2d28" stroke-width="3"/>
            <ellipse cx="240" cy="353" rx="140" ry="76" fill="#55544c" stroke="#2e2d28" stroke-width="3"/>
            <path d="M106 330C120 305 140 295 160 288L208 350L128 378Z" fill="#6f6e66"/>
            <path d="M160 288Q230 268 296 286L240 315Z" fill="#d4d4d2"/><path d="M296 286L304 288L240 316L186 283L240 300Z" fill="#a9a89f"/>
            <path d="M378 340L352 400L330 388L345 320Z" fill="#8f8d82"/>
            <path d="M240 316L304 283L335 298V345L262 380L214 356L240 342Z" fill="#716f65" stroke="#2c2b27" stroke-width="3"/>
            <path d="M155 290L180 281L240 316V342L214 356Z" fill="#67665c" stroke="#2c2b27" stroke-width="3"/>
            <path d="M310 300L337 314V342L310 328Z" fill="#8a897d" stroke="#2c2b27" stroke-width="3"/>
            <path d="M262 340L352 398V416L282 385L250 370Z" fill="#66655b" stroke="#2c2b27" stroke-width="3"/>
            <path d="M128 378L214 352L262 372L258 432L200 470V398L142 432L128 402Z" fill="#716f65" stroke="#2c2b27" stroke-width="3"/>
            <path d="M142 400L198 398L198 412L148 436Z" fill="#4a4942"/>
            <path d="M255 368L337 325V346L283 380V440Q268 430 255 440Z" fill="#605f56" stroke="#2c2b27" stroke-width="3"/>
            <path d="M199 470L260 432Q278 432 281 455L220 495Q200 498 199 470Z" fill="url(#pin)" stroke="#24231f" stroke-width="3"/><ellipse cx="267" cy="449" rx="7" ry="9" fill="#bbb" stroke="#24231f" stroke-width="3"/>
            <path d="M0 216L352 420" stroke="#7d7bd0" stroke-width="2" opacity=".5"/><path d="M282 378L352 419" stroke="#2b2bc4" stroke-width="4"/>
            <path d="M240 35C300 90 330 180 343 310L347 392M244 40C290 90 325 180 335 310L338 388M240 355L345 395" fill="none" stroke="#5d519a" stroke-width="2"/>
            <circle cx="240" cy="42" r="4" fill="#4c4668"/><circle cx="240" cy="355" r="6" fill="#8b7a86" stroke="#664b7b" stroke-width="2"/>
            <path d="M142 605L195 570Q222 565 224 592V620L182 650L200 712L172 731L142 715Z" fill="#504f47" stroke="#24231f" stroke-width="3"/>
            <path d="M142 605L205 568Q196 580 196 600V640L178 655L172 690L142 715Z" fill="#7b796f"/><ellipse cx="208" cy="583" rx="6" ry="9" fill="#aaa" stroke="#24231f" stroke-width="3"/>
            <path d="M256 540L312 503Q335 500 337 522V634L300 660L225 625L256 604Z" fill="#67665c" stroke="#24231f" stroke-width="3"/>
            <path d="M256 540L310 506V620L268 642L240 625L256 604Z" fill="#7b796f" stroke="#33322c" stroke-width="2"/><ellipse cx="324" cy="519" rx="5" ry="8" fill="#bbb" stroke="#24231f" stroke-width="3"/>
            <path d="M142 715L182 690Q165 650 210 640L270 630L302 655L337 634V622L310 620L300 660Q308 690 290 702Q240 722 208 706L172 731Z" fill="#56554d" stroke="#24231f" stroke-width="2"/>
            <path d="M178 672Q172 640 215 630Q250 622 270 626V640Q230 638 205 648Q182 658 178 672Z" fill="#918f84" stroke="#24231f" stroke-width="2"/>
            <path d="M180 675Q190 648 240 641Q290 640 302 660Q306 690 288 702Q240 720 208 705Q182 695 180 675Z" fill="#504f47"/>
            <ellipse cx="211" cy="660" rx="6" ry="4" fill="#ccc" stroke="#24231f" stroke-width="2"/><ellipse cx="266" cy="691" rx="6" ry="4" fill="#ccc" stroke="#24231f" stroke-width="2"/>
          </g>
        </svg>
        <nav class="ribbon">
          <button class="model"><span class="ics"><svg class="wide"><use href="#f-model"/></svg></span><span>MODEL<i class="tri"></i></span></button>
          <button><span class="ics"><svg><use href="#f-sketch"/></svg><svg><use href="#f-line"/></svg><svg><use href="#f-rect"/></svg><svg><use href="#f-offset"/></svg><svg><use href="#f-dim"/></svg></span><span>SKETCH<i class="tri"></i></span></button>
          <button><span class="ics"><svg><use href="#f-extrude"/></svg><svg><use href="#f-form"/></svg></span><span>CREATE<i class="tri"></i></span></button>
          <button><span class="ics"><svg><use href="#f-press"/></svg></span><span>MODIFY<i class="tri"></i></span></button>
          <button><span class="ics"><svg><use href="#f-assemble"/></svg><svg><use href="#f-joint"/></svg></span><span>ASSEMBLE<i class="tri"></i></span></button>
          <button><span class="ics"><svg><use href="#f-construct"/></svg></span><span>CONSTRUCT<i class="tri"></i></span></button>
          <button><span class="ics"><svg><use href="#f-inspect"/></svg></span><span>INSPECT<i class="tri"></i></span></button>
          <button><span class="ics"><svg><use href="#f-insert"/></svg></span><span>INSERT<i class="tri"></i></span></button>
          <button><span class="ics"><svg><use href="#f-make"/></svg></span><span>MAKE<i class="tri"></i></span></button>
          <button><span class="ics"><svg><use href="#f-addins"/></svg></span><span>ADD-INS<i class="tri"></i></span></button>
          <button><span class="ics"><svg class="picked"><use href="#f-select"/></svg></span><span>SELECT<i class="tri"></i></span></button>
        </nav>
        <div class="browser">
          <div class="strip"><b class="rew">◂◂</b><span>BROWSER</span><i class="dot"></i><i class="bar"></i></div>
          <ul class="tree"></ul>
        </div>
        <div class="dock">
          <div class="strip"><span>COMMENTS</span><i class="dot"></i><i class="bar"></i></div>
          <div class="nav-group">
            <button aria-label="Orbit"><svg class="ic9"><use href="#v-orbit"/></svg><i class="tri"></i></button><button aria-label="Look at"><svg class="ic9"><use href="#v-look"/></svg></button><button aria-label="Pan"><svg class="ic9"><use href="#v-pan"/></svg></button><button aria-label="Zoom"><svg class="ic9"><use href="#v-zoom"/></svg></button><button aria-label="Fit"><svg class="ic9"><use href="#v-fit"/></svg><i class="tri"></i></button>
          </div>
          <div class="nav-group tight">
            <button aria-label="Display"><svg class="ic9"><use href="#v-display"/></svg><i class="tri"></i></button><button aria-label="Grid"><svg class="ic9"><use href="#v-env"/></svg><i class="tri"></i></button><button aria-label="Viewports"><svg class="ic9"><use href="#v-split"/></svg><i class="tri"></i></button>
          </div>
        </div>
      </div>
      <footer class="timeline">
        <div class="play">
          <button aria-label="First"><svg class="ic9"><use href="#p-first"/></svg></button><button aria-label="Previous"><svg class="ic9"><use href="#p-prev"/></svg></button><button aria-label="Next"><svg class="ic9"><use href="#p-next"/></svg></button><button aria-label="Play"><svg class="ic9"><use href="#p-play"/></svg></button><button aria-label="Last"><svg class="ic9"><use href="#p-last"/></svg></button>
        </div>
        <ol class="steps"></ol>
        <i class="marker"></i>
        <button class="gear" aria-label="Settings"><svg class="ic9"><use href="#f-gear"/></svg></button>
      </footer>
    </div>
    <figcaption>The final design for the 3D printed 'wheels' and hinges that attach to the laser-cut compartment.</figcaption>
  </figure>
</main>
<script src="script.js"></script>
</body>
</html>
```
FILE: styles.css
```css
* { box-sizing: border-box; }
body { margin: 0; background: #ececec; color: #111; font-family: "Liberation Sans", Arial, sans-serif; }
button, select, input { font: inherit; color: inherit; margin: 0; }
button { border: 0; padding: 0; background: none; }
svg { display: block; }
.defs { position: absolute; width: 0; height: 0; }

.page { display: flex; flex-direction: column; padding-top: 34px; }
.shot { margin: 0; padding: 0 94px 0 93px; }
.shot + .shot { padding-top: 59px; }
.shot-fusion.shot { padding-top: 68px; }
figcaption { margin: 25px -90px 0; font-size: 18px; line-height: 24px; text-align: center; white-space: nowrap; padding-bottom: 3px; }
.shot-fusion figcaption { margin-top: 28px; }

.ic12 { width: 12px; height: 12px; }
.ic10 { width: 10px; height: 10px; }
.ic9 { width: 9px; height: 9px; }
.ln { fill: none; stroke: #333; stroke-width: 2; }
.nd { fill: #fff; stroke: #222; stroke-width: 2; }
.lens { fill: #fff; stroke: #222; stroke-width: 2.5; }
.hd { stroke: #222; stroke-width: 4.5; fill: none; }

/* modeller window */
.rhino { display: grid; grid-template-columns: 91px 1fr; grid-template-rows: 19px 15px 321px 15px; font-family: Inter, sans-serif; font-size: 7px; color: #333; }
.toolbar { grid-column: 1 / 3; display: flex; align-items: center; padding: 0 7px; background: linear-gradient(#dedcde, #cfcdcf); border-bottom: 1px solid #c2c0c2; }
.modes { display: flex; gap: 2px; margin-left: 29px; }
.modes button { padding: 0 8px; line-height: 9px; font-weight: 600; color: #444; border-radius: 2px; }
.modes .on { background: #7d7b7d; color: #fff; }
.layer { display: flex; align-items: center; gap: 6px; margin-left: auto; margin-right: 95px; }
.layer-field { display: flex; align-items: center; width: 112px; height: 10px; padding: 0 2px; background: #fcfcfc; border-radius: 2px; }
.swatch { width: 8px; height: 8px; background: #000; }
.layer-field select { flex: 1; appearance: none; border: 0; background: none; padding: 0; font-size: 6px; line-height: 8px; text-align: center; text-align-last: center; }
.sidebar { grid-row: 2 / 4; display: flex; flex-direction: column; min-height: 0; background: #eee; border-right: 1px solid #666; }
.side-strip { flex: 0 0 15px; background: linear-gradient(#fafafa, #e8e8e8); }
.side-body { padding: 6px 4px 2px; border-bottom: 1px solid #ccc; }
.command { display: block; width: 100%; height: 12px; padding: 0 2px; border: 1px solid #c8c8c8; background: #fff; font-size: 7px; }
.command::placeholder { color: #b5b5b5; opacity: 1; }
.tools { display: grid; grid-template-columns: repeat(5, 17px); grid-auto-rows: 17px; margin: 3px 0 1px -4px; }
.tools button { display: grid; place-items: center; }
.tools svg { width: 16px; height: 16px; }
.snaps { flex: 1; display: flex; flex-direction: column; gap: 3px; min-height: 0; padding: 3px 0 1px 11px; font-size: 6px; font-weight: 500; color: #222; }
.snap-mode { display: grid; grid-auto-rows: 10px; }
.snap-list { flex: 1; display: grid; grid-auto-rows: 1fr; }
.snaps label { display: flex; align-items: center; gap: 3px; line-height: 8px; }
.snaps label.off { color: #b4b4b4; }
.snaps input { appearance: none; flex: none; width: 7px; height: 7px; border-radius: 2px; background: #fff; border: 1px solid #d4d4d4; display: grid; place-items: center; }
.snaps input:disabled { border-color: #ddd; background: #f4f4f4; }
.snaps input[type=radio] { border-radius: 50%; width: 8px; height: 8px; margin-left: -1px; }
.snaps input:checked { background: #3a83ee; border-color: #3a83ee; }
.snaps input[type=radio]:checked::after { content: ""; width: 2px; height: 2px; border-radius: 50%; background: #fff; }
.snaps input[type=checkbox]:checked::after { content: ""; width: 3px; height: 5px; border: solid #fff; border-width: 0 1px 1px 0; transform: rotate(40deg); }
.views { display: flex; align-items: center; gap: 11px; padding: 0 11px 0 4px; background: linear-gradient(#f7f7f7, #e6e6e6); border-bottom: 1px solid #bbb; color: #555; }
.views .icon-btn + .icon-btn { margin-left: -5px; }
.views .icon-btn + .sep { margin-left: -5px; margin-right: -1px; }
.views .on { color: #1f7ae8; }
.views button { line-height: 9px; }
.sep { width: 1px; height: 8px; background: #aaa; }
.views button + .sep:not(.icon-btn + .sep) { margin-left: 1px; }
.views .layouts { margin-left: auto; }
.viewports { display: grid; grid-template: 161px 1fr / 291px 1fr; gap: 2px; background: #e4e4e4; min-height: 0; }
.viewports.single { grid-template: 1fr / 1fr; }
.vp { position: relative; min-width: 0; min-height: 0; overflow: hidden; background: #9da2a7; }
.vp svg { width: 100%; height: 100%; }
.vp-name { position: absolute; left: 0; top: 1px; padding: 1px 3px; font-size: 7px; line-height: 9px; font-weight: 600; color: #fff; background: #888d92; }
.vp-name.on { background: #2b5b96; }
.gmin { fill: none; stroke: #868e9a; stroke-width: .5; opacity: .5; }
.gmaj { fill: none; stroke: #7f8792; stroke-width: .8; }
.red { stroke: #9a4f50; stroke-width: 1; }
.green { stroke: #55a04f; stroke-width: 1; }
.wire { fill: none; stroke: #1c1d20; }
.vp .axis { fill: none; stroke: #6b6f74; stroke-width: 3; }
.axt { fill: #5f6368; stroke: none; font-size: 18px; }
.wire > path:not([stroke-width]):not([stroke]) { stroke-width: 3; }
.status { grid-column: 1 / 3; display: flex; align-items: center; padding: 1px 0 0 2px; background: linear-gradient(#dcdcdc, #d0d0d0); font-size: 6px; font-weight: 500; color: #222; }
.cplane { display: flex; align-items: center; margin-left: auto; margin-right: 9px; width: 39px; height: 9px; padding: 0 3px; border: 1px solid #aaa; border-radius: 3px; }
.cplane select { appearance: none; flex: 1; min-width: 0; padding: 0; border: 0; background: none; line-height: 7px; }
.cplane svg { width: 4px; height: 7px; }
.coord { width: 47px; }
.coord.last { width: 105px; }

/* solid modeller window */
.fusion { display: grid; grid-template-rows: 15px 12px 312px 25px; font-family: "Noto Sans", sans-serif; font-size: 6px; color: #333; }
.tri { display: inline-block; margin-left: 2px; border: solid transparent; border-width: 4px 2px 0; border-top-color: #333; vertical-align: 1px; }
.f-bar { display: flex; align-items: center; gap: 12px; padding: 0 5px; background: #d6d6d6; border-bottom: 1px solid #aaa; }
.f-bar button { display: flex; align-items: center; color: #444; }
.f-bar .tri { margin-left: 3px; }
.f-bar .dim { color: #888; margin-left: -6px; }
.f-bar .dim .tri { border-top-color: #888; }
.f-bar .user { margin-left: auto; }
.f-tabs { display: flex; justify-content: space-between; background: #d6d6d6; border-bottom: 1px solid #bbb; }
.f-tab { display: flex; align-items: center; gap: 4px; padding: 0 3px 0 4px; background: #e6e6e6; border-right: 1px solid #999; font-size: 7px; line-height: 11px; }
.f-tab span { margin-right: 8px; }
.f-tab button { font-size: 7px; color: #555; font-family: "DejaVu Sans", sans-serif; }
.f-up { padding: 3px 3px 0 0; }
.f-up i { display: block; width: 5px; height: 5px; border: solid #444; border-width: 1px 0 0 1px; transform: rotate(45deg); }
.f-canvas { position: relative; display: flex; flex-direction: column; min-height: 0; padding: 2px 2px 3px; overflow: hidden; }
.scene { position: absolute; inset: 0; width: 100%; height: 100%; }
.cube { font-size: 12px; fill: #777; }
.ribbon, .browser, .dock { position: relative; }
.ribbon { display: grid; grid-template-columns: 54px 117px 48px 39px 48px 52px 39px 37px 31px 41px 37px; width: max-content; height: 31px; background: #dcdcdc; }
.ribbon button { display: flex; flex-direction: column; align-items: center; justify-content: space-between; padding: 3px 0 0; line-height: 8px; color: #222; white-space: nowrap; border-right: 1px solid #cacaca; }
.ribbon button:last-child { border-right: 0; }
.ribbon .ics { display: flex; gap: 3px; }
.ribbon svg { width: 20px; height: 18px; }
.ribbon .wide { width: 26px; }
.ribbon .picked { background: #4a77a8; }
.ribbon .tri { margin-left: 2px; }
.ribbon .model { background: #b4b4b4; color: #fff; border-left: 1px solid #bbb; font-weight: 600; }
.ribbon .model .tri { border-top-color: #fff; }
.browser { margin-top: 3px; }
.strip { display: flex; align-items: center; width: 158px; height: 12px; padding: 0 1px 0 13px; background: #cdcdcd; border: 1px solid #bdbdbd; line-height: 8px; color: #444; }
.strip .rew { width: 11px; margin-left: -11px; font-size: 5px; color: #222; font-family: "DejaVu Sans", sans-serif; }
.dot { width: 5px; height: 5px; border-radius: 50%; background: #222; margin-left: auto; margin-right: 4px; }
.bar { width: 1px; height: 8px; background: #999; }
.tree { list-style: none; margin: 2px 0 0; padding: 0; height: 190px; display: grid; grid-auto-rows: 1fr; }
.tree li { display: flex; align-items: center; }
.tree .twist { width: 10px; text-align: center; font-family: "DejaVu Sans", sans-serif; font-size: 6px; color: #333; }
.row { display: flex; align-items: center; height: 10px; padding-right: 5px; background: #cbcbcb; line-height: 8px; }
.row .bulb { width: 6px; height: 8px; margin: 0 3px; }
.row .kind { width: 9px; height: 9px; margin: 0 3px; }
.row span { padding: 0 0 0 4px; }
.row.root { background: #7c7c7c; color: #fff; font-weight: 700; }
.row.picked { padding-right: 0; }
.row.picked span { background: #4f7fae; color: #fff; padding: 1px 5px 1px 4px; font-weight: 600; }
.row.dotted span { border-bottom: 1px dashed #5c73a8; }
.target { display: grid; place-items: center; width: 13px; height: 10px; background: #cbcbcb; }
.target::after { content: ""; width: 6px; height: 6px; border-radius: 50%; border: 1px solid #777; background: radial-gradient(#222 30%, #eee 45%); }
.dock { display: flex; align-items: center; margin-top: auto; }
.nav-group { display: flex; align-items: center; justify-content: space-around; width: 77px; height: 12px; margin-left: 112px; background: #d2d2d2; }
.nav-group.tight { width: 49px; margin-left: 3px; }
.nav-group button { display: flex; align-items: center; }
.nav-group .tri { margin-left: 1px; }
.timeline { display: flex; align-items: flex-start; padding: 6px 2px 0 4px; background: linear-gradient(#cfcfcf, #bdbdbd); }
.play { display: flex; gap: 4px; }
.steps { list-style: none; display: flex; justify-content: space-between; width: 175px; margin: 0 0 0 11px; padding: 0; position: relative; }
.steps li { width: 10px; height: 15px; }
.steps svg { width: 10px; height: 10px; }
.steps li::before { content: ""; position: absolute; top: 12px; width: 1px; height: 3px; margin-left: 4px; background: #555; }
.steps::after { content: ""; position: absolute; left: 4px; right: 5px; top: 14px; height: 1px; background: #555; }
.marker { width: 7px; height: 17px; margin: -3px 0 0 -3px; background: linear-gradient(#444, #444) center / 1px 100% no-repeat; }
.marker::before { content: ""; display: block; border: solid transparent; border-width: 5px 3px 0; border-top-color: #444; }
.gear { margin-left: auto; }
```
FILE: script.js
```js
const tools = [
  'select', 'point+', 'polyline+', 'curve+', 'circle+',
  'ellipse+', 'arc+', 'rect+', 'polygon+', 'fillet+',
  'surface+', 'sweep+', 'box+', 'spheres+', 'cylinder+',
  'plane+', 'puzzle', 'explode', 'trim', 'split',
  'group+', 'ungroup', 'edit', 'handle+', 'text',
  'scale+', 'array', 'rotate', 'solid+', 'extrude+',
  'grid+', 'align+', 'copy+', 'check+', 'shapes+',
  'render+', 'zoom-dyn', 'zoom-win', 'zoom-ext', 'zoom'
];
const snaps = ['End*', 'Near*', 'Point', 'Midpoint*', 'Center*', 'Intersection*', 'Perpendicular*',
  'Tangent', 'Quadrant', 'Knot', 'Vertex', 'On curve-', 'On surface-'];

const use = (id, cls = '') => `<svg class="${cls}"><use href="#${id}"/></svg>`;

document.querySelectorAll('.sidebar').forEach(side => {
  side.append(document.getElementById('sidebar-template').content.cloneNode(true));
  side.querySelector('.tools').innerHTML = tools.map(t => {
    const name = t.replace('+', '');
    const more = t.endsWith('+') ? '<use href="#more"/>' : '';
    return `<button aria-label="${name}"><svg><use href="#t-${name}"/>${more}</svg></button>`;
  }).join('');
  side.querySelector('.snap-mode').innerHTML = ['Persistent', 'One shot'].map((m, i) =>
    `<label><input type="radio" name="mode-${side.dataset.name}" ${i ? '' : 'checked'}>${m}</label>`).join('');
  side.querySelector('.snap-list').innerHTML = snaps.map(s => {
    const off = s.endsWith('-');
    return `<label class="${off ? 'off' : ''}"><input type="checkbox" ${s.endsWith('*') ? 'checked' : ''} ${off ? 'disabled' : ''}>${s.replace(/[*-]$/, '')}</label>`;
  }).join('');
});

/* [indent, twist, bulb, kind, label, row class] */
const nodes = [
  [8, '◢', 'on', 'root', 'The Egg Wheels v2', 'root'],
  [17, '▷', '', 'folder', 'Named Views', ''],
  [17, '', '', 'doc', 'Units: mm', ''],
  [17, '▷', 'off', 'folder', 'Origin', ''],
  [17, '◢', 'on', 'folder', 'Bodies', ''],
  [27, '', 'on', 'body', 'Body1', ''],
  [27, '', 'on', 'body', 'Body2', 'picked'],
  [17, '◢', 'on', 'folder', 'Sketches', ''],
  [27, '', 'on', 'sketch', 'Sketch2', 'dotted'],
  [27, '', 'off', 'sketch', 'Sketch3', ''],
  [27, '', 'off', 'sketch', 'Sketch4', ''],
  [27, '', 'off', 'sketch', 'Sketch5', ''],
  [27, '', 'off', 'sketch', 'Sketch6', ''],
  [27, '', 'on', 'sketch', 'Sketch7', ''],
  [27, '', 'off', 'sketch', 'Sketch8', '']
];
document.querySelector('.tree').innerHTML = nodes.map(([pad, twist, bulb, kind, label, cls]) =>
  `<li style="padding-left:${pad}px"><i class="twist">${twist}</i><div class="row ${cls}">` +
  (bulb ? use('b-' + bulb, 'bulb') : '') + use('n-' + kind, 'kind') +
  `<span>${label}</span></div>${cls === 'root' ? '<i class="target"></i>' : ''}</li>`).join('');

const steps = 'sketch revolve sketch extrude sketch extrude sketch extrude extrude sketch extrude sketch sketch extrude';
document.querySelector('.steps').innerHTML = steps.split(' ').map(s => `<li>${use('m-' + s)}</li>`).join('');
```
